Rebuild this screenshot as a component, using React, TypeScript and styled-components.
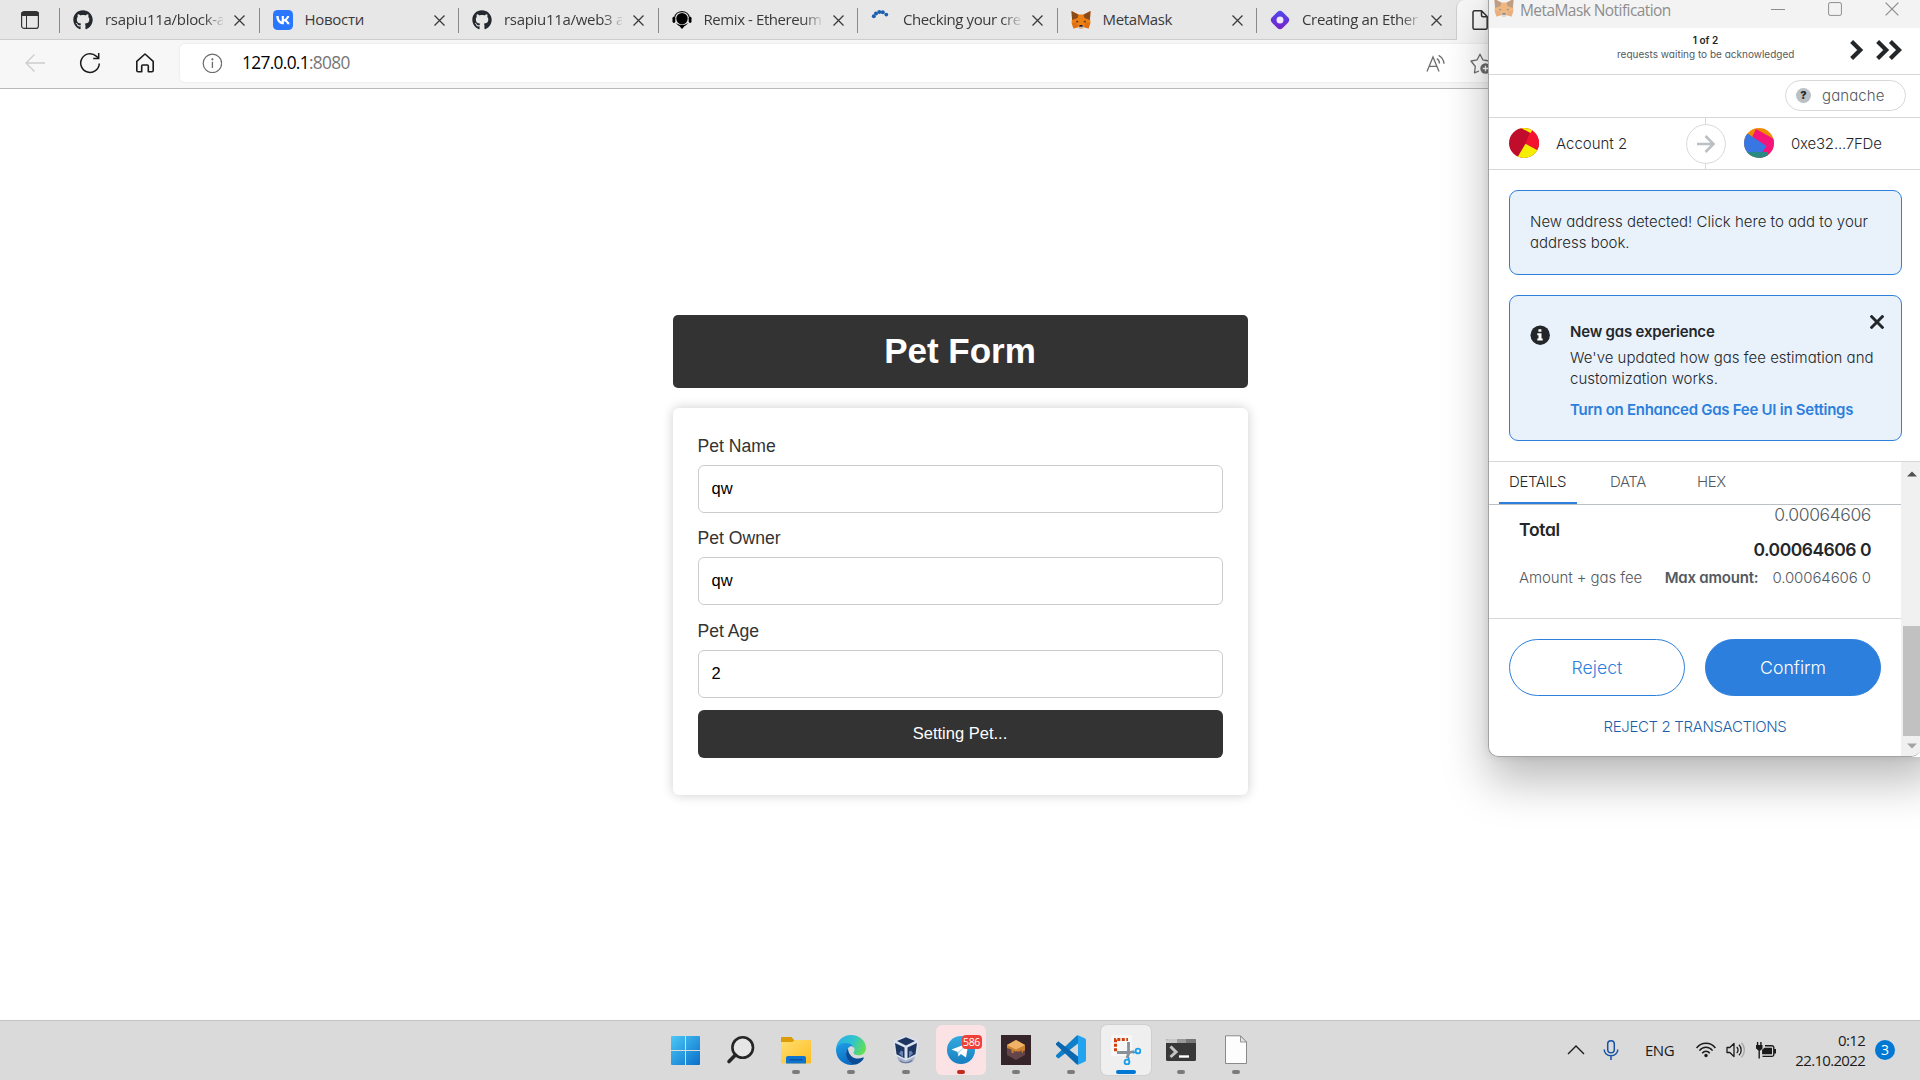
import React from "react";
import styled, { createGlobalStyle } from "styled-components";
import { FaGithub } from "react-icons/fa";

const segoe = `"Open Sans", "Noto Sans", sans-serif`;
const euclid = `Inter, "Open Sans", sans-serif`;
const arial = `"Liberation Sans", Arial, sans-serif`;

const GlobalStyle = createGlobalStyle`
  * { box-sizing: border-box; }
  body { margin: 0; background: #fff; overflow: hidden; }
  svg { display: block; flex: none; }
`;

/* ---------- shared ---------- */

const Screen = styled.div`
  position: relative;
  width: 1920px;
  height: 1080px;
  display: flex;
  flex-direction: column;
  overflow: hidden;
  background: #fff;
  font-family: ${segoe};
`;

const Text = styled.span<{ $ls?: number }>`
  white-space: nowrap;
  letter-spacing: ${(p) => p.$ls ?? 0}px;
`;

/* ---------- browser ---------- */

const TabStrip = styled.header`
  height: 40px;
  flex: none;
  display: flex;
  background: #e7e7e7;
  border-bottom: 1px solid #cdcdcd;
`;

const TabActions = styled.div`
  width: 59px;
  padding: 11px 0 0 21px;
`;

const Tab = styled.div`
  width: 199.5px;
  display: flex;
  align-items: flex-start;
  padding-top: 10px;

  &::before {
    content: "";
    width: 1px;
    height: 25px;
    margin-top: -2px;
    background: #8a8a8a;
  }
`;

const Favicon = styled.div`
  width: 20px;
  height: 20px;
  margin-left: 13px;
`;

const TabTitle = styled.div<{ $ls: number; $fade?: boolean }>`
  width: 118px;
  margin: -1px 0 0 12px;
  overflow: hidden;
  white-space: nowrap;
  font-size: 15px;
  line-height: 21px;
  letter-spacing: ${(p) => p.$ls}px;
  color: #3a3a3a;
  mask-image: ${(p) => (p.$fade ? "linear-gradient(90deg, #000 84%, transparent 102%)" : "none")};
`;

const TabClose = styled.div`
  margin: 5px 0 0 11px;
`;

const ActiveTab = styled.div`
  flex: 1;
  height: 40px;
  padding: 10px 0 0 15px;
  background: #f7f7f7;
  border-left: 1px solid #cfcfcf;
  border-radius: 8px 0 0 0;
`;

const Toolbar = styled.nav`
  height: 49px;
  flex: none;
  display: flex;
  align-items: center;
  padding: 0 0 2px 24px;
  background: #f7f7f7;
  border-bottom: 1px solid #b9b9b9;
`;

const NavIcon = styled.div<{ $gap: number }>`
  margin-right: ${(p) => p.$gap}px;
`;

const AddressBar = styled.div`
  flex: 1;
  height: 38px;
  display: flex;
  align-items: center;
  padding-left: 22px;
  background: #fff;
  border-radius: 5px 0 0 5px;
  box-shadow: 0 0 3px rgba(0, 0, 0, 0.08);
`;

const Url = styled.div`
  width: 1184px;
  margin: 0 0 0 20px;
  font-size: 17.3px;
  line-height: 24px;
  letter-spacing: -0.66px;
  color: #000;
  span { color: #767676; }
`;

const StarSlot = styled.div`
  margin-left: 24px;
`;

/* ---------- pet form ---------- */

const Page = styled.main`
  flex: 1;
  display: flex;
  flex-direction: column;
  align-items: center;
  padding-top: 226px;
  font-family: ${arial};
`;

const FormTitle = styled.h1`
  width: 575px;
  height: 73px;
  margin: 0 0 20px;
  border-radius: 5px;
  background: #333;
  color: #fff;
  font-size: 35px;
  line-height: 71px;
  text-align: center;
`;

const FormCard = styled.form`
  width: 575px;
  height: 387px;
  padding: 25px;
  border-radius: 6px;
  background: #fff;
  box-shadow: 0 0 12px rgba(0, 0, 0, 0.2);
`;

const Label = styled.label`
  display: block;
  height: 32px;
  font-size: 17.6px;
  line-height: 26px;
  color: #333;
`;

const Input = styled.input`
  display: block;
  width: 525px;
  height: 48px;
  margin-bottom: 12.4px;
  padding: 0 13px 1px;
  border: 1px solid #ccc;
  border-radius: 6px;
  background: #fff;
  font: 16.5px ${arial};
  color: #000;
  outline: none;
`;

const Submit = styled.button`
  width: 525px;
  height: 48px;
  padding: 0 0 1px;
  border: 0;
  border-radius: 6px;
  background: #333;
  color: #fff;
  font: 16.5px ${arial};
`;

/* ---------- wallet window ---------- */

const Window = styled.aside`
  position: absolute;
  top: -10px;
  left: 1488px;
  width: 433px;
  height: 767px;
  padding-top: 10px;
  display: flex;
  flex-direction: column;
  overflow: hidden;
  border: 1px solid #a3a3a3;
  border-top: 0;
  border-right: 0;
  border-radius: 0 0 10px 10px;
  background: #fff;
  font-family: ${euclid};
  font-feature-settings: "cv11", "ss03";
  font-size: 15px;
  font-weight: 350;
  color: #24272a;
`;

const WindowShadow = styled.div`
  position: absolute;
  top: -10px;
  left: 1488px;
  width: 450px;
  height: 767px;
  border-radius: 10px;
  box-shadow: 0 24px 46px rgba(0, 0, 0, 0.27), 0 0 8px rgba(0, 0, 0, 0.1);
`;

const WindowBar = styled.div`
  height: 28px;
  flex: none;
  display: flex;
  align-items: flex-start;
  padding-left: 5px;
  background: #f3f3f3;
  color: #8e8e8e;
  font: 15.5px/20px ${segoe};
`;

const FadedFox = styled.div`
  margin-top: -2px;
  opacity: 0.5;
`;

const WindowTitle = styled.div`
  width: 251px;
  margin-left: 6px;
  letter-spacing: -0.57px;
  white-space: nowrap;
`;

const WindowButtons = styled.div`
  display: flex;
  margin-top: 2px;
  gap: 43px;
`;

const QueueBar = styled.div`
  height: 47px;
  flex: none;
  display: flex;
  padding: 5px 0 0 128px;
  border-bottom: 1px solid #d6d9dc;
`;

const QueueText = styled.div`
  width: 177px;
  text-align: center;
  font-size: 10px;
  font-weight: 400;
  line-height: 14px;
  white-space: nowrap;
  color: #535a61;
  b { display: block; color: #24272a; font-weight: 600; }
`;

const QueueArrows = styled.div`
  display: flex;
  gap: 13px;
  margin: 7px 0 0 56px;
`;

const NetworkRow = styled.div`
  height: 43px;
  flex: none;
  display: flex;
  justify-content: flex-end;
  padding: 5px 15px 0 0;
  border-bottom: 1px solid #d6d9dc;
`;

const NetworkPill = styled.div`
  width: 121px;
  height: 31px;
  display: flex;
  align-items: center;
  gap: 11px;
  padding-left: 10px;
  border: 1px solid #d6d9dc;
  border-radius: 16px;
  color: #535a61;
`;

const QuestionDot = styled.div`
  width: 15px;
  height: 15px;
  border-radius: 50%;
  background: #bbc0c5;
  color: #24272a;
  font-size: 11px;
  font-weight: 800;
  line-height: 15px;
  text-align: center;
`;

const AccountRow = styled.div`
  height: 52px;
  flex: none;
  display: grid;
  grid-template-columns: 196px 41px 1fr;
  align-items: center;
  border-bottom: 1px solid #d6d9dc;
`;

const Party = styled.div<{ $pad: number }>`
  display: flex;
  align-items: center;
  gap: 17px;
  padding: 0 0 1px ${(p) => p.$pad}px;
`;

const Direction = styled.div`
  height: 51px;
  display: flex;
  flex-direction: column;
  align-items: center;
  &::before, &::after {
    content: "";
    flex: 1;
    width: 1px;
    background: #d6d9dc;
  }
`;

const Alerts = styled.section`
  display: flex;
  flex-direction: column;
  gap: 20px;
  padding: 20px 17px 20px 20px;
`;

const Alert = styled.div<{ $height: number }>`
  width: 393px;
  height: ${(p) => p.$height}px;
  display: flex;
  padding: 20px 0 0 20px;
  border: 1px solid #2c7fdc;
  border-radius: 9px;
  background: #e9f2fb;
  line-height: 21px;
`;

const AlertIcon = styled.div`
  width: 40px;
  padding-top: 9px;
`;

const AlertBody = styled.div`
  width: 300px;
  padding-top: 5px;
  display: flex;
  flex-direction: column;
`;

const AlertClose = styled.div`
  margin-top: -1px;
`;

const AlertTitle = styled(Text)`
  font-weight: 600;
  margin-bottom: 5px;
`;

const AlertLink = styled(Text)`
  margin-top: 10px;
  font-weight: 600;
  color: #2c7fdc;
`;

const Lines = styled.div`
  display: flex;
  flex-direction: column;
`;

const ScrollArea = styled.section`
  flex: 1;
  display: flex;
  border-top: 1px solid #d6d9dc;
`;

const ScrollContent = styled.div`
  width: 412px;
  display: flex;
  flex-direction: column;
`;

const DetailTabs = styled.div`
  height: 43px;
  flex: none;
  display: flex;
  align-items: flex-start;
  padding-left: 10px;
  border-bottom: 1px solid #bbc0c5;
`;

const DetailTab = styled.div<{ $width: number; $active?: boolean }>`
  width: ${(p) => p.$width}px;
  height: 42px;
  padding: 10px 0 0 10px;
  margin-right: 23px;
  line-height: 20px;
  white-space: nowrap;
  letter-spacing: -0.4px;
  color: ${(p) => (p.$active ? "#24272a" : "#535a61")};
  border-bottom: 2px solid ${(p) => (p.$active ? "#2c7fdc" : "transparent")};
`;

const Totals = styled.div`
  height: 114px;
  flex: none;
  padding: 0 30px;
  border-bottom: 1px solid #d6d9dc;
  color: #535a61;
`;

const TotalRow = styled.div`
  height: 58px;
  display: flex;
  justify-content: space-between;
`;

const TotalLabel = styled.div`
  padding-top: 14px;
  font-size: 17.5px;
  font-weight: 600;
  line-height: 22px;
  letter-spacing: -0.3px;
  color: #24272a;
`;

const Amounts = styled.div`
  display: flex;
  flex-direction: column;
  align-items: flex-end;
  font-size: 17.5px;
  line-height: 20px;
  b { margin-top: 15px; font-weight: 600; color: #24272a; white-space: nowrap; letter-spacing: -0.5px; }
`;

const FeeRow = styled.div`
  display: flex;
  justify-content: space-between;
  line-height: 40px;
  margin-top: -5px;
  b { font-weight: 600; white-space: nowrap; letter-spacing: -0.2px; margin-right: 14px; }
`;

const Actions = styled.div`
  display: flex;
  gap: 20px;
  padding: 20px 0 0 20px;
`;

const PillButton = styled.button<{ $primary?: boolean }>`
  width: 176px;
  height: 57px;
  padding: 0 0 1px;
  border: 1px solid #2c7fdc;
  border-radius: 29px;
  background: ${(p) => (p.$primary ? "#2c7fdc" : "#fff")};
  color: ${(p) => (p.$primary ? "#fff" : "#2c7fdc")};
  font-family: ${euclid};
  font-feature-settings: "cv11";
  font-size: 17.7px;
  font-weight: 350;
`;

const RejectAll = styled.div`
  margin-top: 20px;
  text-align: center;
  line-height: 21px;
  color: #1d5fa8;
`;

const Scrollbar = styled.div`
  width: 20px;
  display: flex;
  flex-direction: column;
  align-items: center;
  padding: 9px 0 8px 2px;
  background: #f0f0f0;
`;

const Thumb = styled.div`
  width: 18px;
  height: 110px;
  flex: none;
  margin: 149px 0 7px;
  background: #c1c1c1;
`;

/* ---------- taskbar ---------- */

const Taskbar = styled.footer`
  height: 60px;
  flex: none;
  display: flex;
  padding-left: 658px;
  border-top: 1px solid #c3c3c3;
  background: #dadada;
`;

const Slot = styled.div`
  width: 55px;
  height: 59px;
  display: flex;
  justify-content: center;
  padding-top: 4px;
`;

const Tile = styled.div<{ $bg?: string; $edge?: string }>`
  position: relative;
  width: 50px;
  height: 50px;
  display: flex;
  flex-direction: column;
  align-items: center;
  padding-top: 10px;
  border-radius: 6px;
  background: ${(p) => p.$bg ?? "transparent"};
  box-shadow: ${(p) => (p.$edge ? `0 0 0 1px ${p.$edge}` : "none")};
`;

const Running = styled.div<{ $width?: number; $color?: string }>`
  width: ${(p) => p.$width ?? 8}px;
  height: 4px;
  margin-top: 5px;
  border-radius: 2px;
  background: ${(p) => p.$color ?? "#7b7b7b"};
`;

const Unread = styled.div`
  position: absolute;
  top: 10px;
  left: 26px;
  width: 20px;
  height: 14px;
  border-radius: 4px;
  background: #f0403a;
  color: #fff;
  font: 10.5px/14px ${segoe};
  text-align: center;
  letter-spacing: -0.4px;
`;

const Tray = styled.div`
  display: flex;
  align-items: center;
  width: 352px;
  margin-left: 304px;
  padding-bottom: 1px;
  color: #1b1b1b;
`;

const TrayItem = styled.div<{ $gap: number }>`
  margin-right: ${(p) => p.$gap}px;
  font-size: 15px;
  white-space: nowrap;
`;

const Clock = styled.div`
  width: 88px;
  text-align: right;
  font-size: 15px;
  line-height: 20px;
  letter-spacing: -0.68px;
  white-space: nowrap;
`;

const NoticeCount = styled.div`
  width: 20px;
  height: 20px;
  margin-left: 10px;
  border-radius: 50%;
  background: #0078d4;
  color: #fff;
  font-size: 14px;
  line-height: 20px;
  text-align: center;
`;

/* ---------- drawings ---------- */

const Cross = ({ size = 11, color = "#3b3b3b", w = 1.3 }: { size?: number; color?: string; w?: number }) => (
  <svg width={size} height={size} viewBox="0 0 11 11" stroke={color} strokeWidth={w} fill="none">
    <path d="M.5 .5l10 10M10.5 .5l-10 10" />
  </svg>
);

const Fox = () => (
  <svg width="20" height="20" viewBox="0 0 20 20">
    <path d="M0.5 1L7.5 4.5h5L19.5 1 19 8.5 19.5 13 17.5 18.5 12.5 17.3 11.5 18.7h-3L7.5 17.3 2.5 18.5.5 13 1 8.5z" fill="#ee7f12" />
    <path d="M.5 1L7.5 4.7 6.5 8 1.2 10 .8 6zM19.5 1L12.5 4.7 13.5 8 18.8 10 19.2 6z" fill="#8a4a1c" />
    <path d="M5.6 10.4L8 12 5.2 12.4zM14.4 10.4L12 12 14.8 12.4z" fill="#3a2c26" />
    <path d="M7.5 16.4L8.5 15.3h3l1 1.1-.8 2.3H8.3z" fill="#cfc0b3" />
    <path d="M8.5 15h3l.3 1.7H8.2z" fill="#221b18" />
    <path d="M1 13.2L5 12.6 7.3 16.8 2.5 18.5zM19 13.2L15 12.6 12.7 16.8 17.5 18.5z" fill="#df6f12" />
  </svg>
);

const VkLogo = () => (
  <svg width="20" height="20" viewBox="0 0 20 20">
    <rect width="20" height="20" rx="4.6" fill="#2a77ff" />
    <path d="M10.7 14.3C6 14.3 3.4 11.1 3.3 6h2.300c.1 3.7 1.7 5.3 3.1 5.6V6h2.200v3.200c1.300-.1 2.700-1.600 3.200-3.200h2.200c-.4 2-1.800 3.500-2.900 4.100 1 .5 2.700 1.800 3.300 4.200h-2.400c-.5-1.600-1.800-2.800-3.400-3v3z" fill="#fff" />
  </svg>
);

const RemixLogo = () => (
  <svg width="20" height="20" viewBox="0 0 20 20">
    <path d="M2.600 7.500a7.500 7 0 0 1 14.800 0" fill="none" stroke="#111" strokeWidth="1.200" />
    <rect x="0.500" y="6.800" width="2.800" height="6.200" rx="1.400" />
    <rect x="16.700" y="6.800" width="2.800" height="6.200" rx="1.400" />
    <circle cx="10" cy="8.600" r="5.700" />
    <path d="M3.500 13l4 1.700h5l4-1.700-3.500 3-3 .5-3-.5zM7.500 16.300h5L10 19z" />
  </svg>
);

const LoadingDots = () => (
  <svg width="20" height="20" viewBox="0 0 20 20" fill="#1b5fae">
    <circle cx="2.800" cy="6.200" r="2" />
    <circle cx="5" cy="3.500" r="2" />
    <circle cx="8.300" cy="2" r="2" />
    <circle cx="11.800" cy="2.300" r="2" />
    <circle cx="15.300" cy="4.600" r="1.900" />
  </svg>
);

const HashLogo = () => (
  <svg width="20" height="20" viewBox="0 0 20 20">
    <defs>
      <linearGradient id="node" x1="0" y1="0" x2="1" y2="1">
        <stop offset="0" stopColor="#4a4cf0" />
        <stop offset="1" stopColor="#7a1fc4" />
      </linearGradient>
    </defs>
    <rect x="2.500" y="2.500" width="15" height="15" rx="3.800" transform="rotate(45 10 10)" fill="url(#node)" />
    <circle cx="10" cy="10" r="3.500" fill="#efe9fb" />
  </svg>
);

const TabActionsIcon = () => (
  <svg width="18" height="18" viewBox="0 0 18 18" fill="none" stroke="#333" strokeWidth="1.200">
    <rect x=".6" y=".6" width="16.800" height="16.800" rx="2.500" />
    <path d="M1 1.500h16v3H1z" fill="#333" />
    <path d="M5.500 5v12" strokeWidth="1" />
  </svg>
);

const FileOutline = () => (
  <svg width="16" height="20" viewBox="0 0 16 20" fill="none" stroke="#333" strokeWidth="1.500" strokeLinejoin="round">
    <path d="M2.500.8h7L15.200 6.500v11.200a1.500 1.500 0 0 1-1.500 1.500H2.500A1.500 1.500 0 0 1 1 17.700V2.300A1.500 1.500 0 0 1 2.500.8zM9.500 1v4.200a1.500 1.500 0 0 0 1.500 1.500h4" />
  </svg>
);

const BackIcon = () => (
  <svg width="22" height="20" viewBox="0 0 22 20" fill="none" stroke="#cdcdcd" strokeWidth="1.400">
    <path d="M21 10H2M10.500 1.500L2 10l8.500 8.500" />
  </svg>
);

const ReloadIcon = () => (
  <svg width="22" height="22" viewBox="0 0 22 22" fill="none" stroke="#1b1b1b" strokeWidth="1.500">
    <path d="M20.300 11.500A9.300 9.300 0 1 1 17.200 4.100L19.500 6M19.700 1v5.500h-5.500" />
  </svg>
);

const HomeIcon = () => (
  <svg width="20" height="20" viewBox="0 0 20 20" fill="none" stroke="#1b1b1b" strokeWidth="1.600" strokeLinejoin="round">
    <path d="M1.800 8.300L10 1l8.200 7.300v9.200a1.300 1.300 0 0 1-1.300 1.300h-3.600V13a1 1 0 0 0-1-1H7.700a1 1 0 0 0-1 1v5.800H3.100a1.300 1.300 0 0 1-1.300-1.300z" />
  </svg>
);

const SiteInfoIcon = () => (
  <svg width="20" height="20" viewBox="0 0 20 20" fill="none" stroke="#6a6a6a" strokeWidth="1.200">
    <circle cx="10.400" cy="10.400" r="9.200" />
    <path d="M10.400 8.800v6.200" strokeWidth="1.300" />
    <circle cx="10.400" cy="6.300" r=".5" fill="#6a6a6a" />
  </svg>
);

const ReadAloudIcon = () => (
  <svg width="20" height="19" viewBox="0 0 20 19" fill="none" stroke="#6e6e6e" strokeWidth="1.300">
    <path d="M1 17.500L7 3l6 14.500M3.200 12.300h7.600" />
    <path d="M10.800 4.500a6 6 0 0 1 2.700 5M12.600 1.300a10 10 0 0 1 5.400 8.500" />
  </svg>
);

const StarIcon = () => (
  <svg width="22" height="21" viewBox="0 0 22 21" fill="none" stroke="#6e6e6e" strokeWidth="1.300" strokeLinejoin="round">
    <path d="M9 18l-4.500 1.800.8-6.300L1 8l6.200-1.200L10 1.200l2.800 5.600L19 8" />
    <circle cx="15.500" cy="15.500" r="5.200" fill="#6e6e6e" stroke="none" />
    <path d="M15.500 12.800v5.400M12.800 15.500h5.400" stroke="#fff" />
  </svg>
);

const Chevron = ({ double }: { double?: boolean }) => (
  <svg width={double ? 26 : 13} height="20" viewBox={double ? "0 0 26 20" : "0 0 13 20"} fill="none" stroke="#24272a" strokeWidth="4.200">
    <path d="M1.600 1.600L10.200 10l-8.600 8.400" />
    {double && <path d="M14.400 1.600L23 10l-8.600 8.400" />}
  </svg>
);

const AvatarRed = () => (
  <svg width="30" height="30" viewBox="0 0 30 30">
    <clipPath id="av1"><circle cx="15" cy="15" r="15" /></clipPath>
    <g clipPath="url(#av1)">
      <rect width="30" height="30" fill="#c00d2b" />
      <path d="M21 4L24 0h6v22L16.500 15.700z" fill="#f3122f" />
      <path d="M16.500 15.700L30 23v7H8z" fill="#f5ee00" />
      <path d="M12 0l9.500 5 2-3-4-3z" fill="#f5ee00" />
    </g>
  </svg>
);

const AvatarBlue = () => (
  <svg width="30" height="30" viewBox="0 0 30 30">
    <clipPath id="av2"><circle cx="15" cy="15" r="15" /></clipPath>
    <g clipPath="url(#av2)">
      <rect width="30" height="30" fill="#f28a00" />
      <path d="M12 1L30 11v19H16L8.500 8z" fill="#f5147a" />
      <path d="M-1 2.500L22.500 18 17 26H-2z" fill="#3876e3" />
      <path d="M0 24h24v7H0z" fill="#2a8a83" />
    </g>
  </svg>
);

const ArrowCircle = () => (
  <svg width="40" height="40" viewBox="0 0 40 40" fill="none">
    <circle cx="20" cy="20" r="19.400" stroke="#d6d9dc" />
    <path d="M11 20h16M19.500 12l8 8-8 8" stroke="#bbc0c5" strokeWidth="2.600" />
  </svg>
);

const InfoIcon = () => (
  <svg width="20" height="20" viewBox="0 0 20 20">
    <circle cx="10.200" cy="10.200" r="9.700" fill="#24272a" />
    <path d="M8.400 4.200h3v2.600h-3zM7.300 8.200h4.200v5.400h1.200v2H7.300v-2h1.200v-3.400H7.300z" fill="#fff" />
  </svg>
);

const ScrollArrow = ({ down }: { down?: boolean }) => (
  <svg width="10" height="6" viewBox="0 0 10 6">
    <path d={down ? "M0 .5h10L5 5.500z" : "M0 5.500h10L5 .5z"} fill={down ? "#a3a3a3" : "#505050"} />
  </svg>
);

const WindowsLogo = () => (
  <svg width="30" height="30" viewBox="0 0 30 30">
    <defs>
      <linearGradient id="win" x1="0" y1="0" x2="1" y2="1">
        <stop offset="0" stopColor="#4cc8f8" />
        <stop offset="1" stopColor="#0a6fc9" />
      </linearGradient>
    </defs>
    <path d="M0 2A1 1 0 0 1 1 1H14v14H0zM15 1h13a1 1 0 0 1 1 1v13H15zM0 16h14v14H1a1 1 0 0 1-1-1zM15 16h14v13a1 1 0 0 1-1 1H15z" fill="url(#win)" />
  </svg>
);

const SearchLogo = () => (
  <svg width="30" height="30" viewBox="0 0 30 30" fill="none" stroke="#262626">
    <circle cx="16.700" cy="12.500" r="10.300" strokeWidth="2.600" fill="#e6e6e6" />
    <path d="M9.400 20L3 26.500" strokeWidth="3.600" strokeLinecap="round" />
  </svg>
);

const FolderLogo = () => (
  <svg width="30" height="30" viewBox="0 0 30 30">
    <defs>
      <linearGradient id="fold" x1="0" y1="0" x2="1" y2="1">
        <stop offset="0" stopColor="#ffdf70" />
        <stop offset="1" stopColor="#fdbd22" />
      </linearGradient>
    </defs>
    <path d="M0 3a1 1 0 0 1 1-1h9.500l2.500 3h15a2 2 0 0 1 2 2v6H0z" fill="#dc9c05" />
    <path d="M0 7h11.500l2-2H29a1 1 0 0 1 1 1v21.500a1 1 0 0 1-1 1H1a1 1 0 0 1-1-1z" fill="url(#fold)" />
    <path d="M5 28.500V23a2 2 0 0 1 2-2h16a2 2 0 0 1 2 2v5.500z" fill="#0f74cf" />
    <path d="M8.500 24.800h13" stroke="#0a4d94" strokeWidth="1.200" />
  </svg>
);

const EdgeLogo = () => (
  <svg width="30" height="30" viewBox="0 0 30 30">
    <defs>
      <linearGradient id="e1" x1="0" y1=".3" x2="1" y2=".6">
        <stop offset="0" stopColor="#2aaee6" />
        <stop offset=".5" stopColor="#2fc3cf" />
        <stop offset="1" stopColor="#66e04f" />
      </linearGradient>
      <linearGradient id="e2" x1="0" y1="0" x2=".3" y2="1">
        <stop offset="0" stopColor="#1fa0e6" />
        <stop offset="1" stopColor="#0c6cc4" />
      </linearGradient>
    </defs>
    <path d="M0 13.500C1 5.500 7 0 15 0c8.500 0 15 6 15 13 0 4.500-3.200 7.300-7.300 7.300-3.300 0-5.200-1.300-5.200-2.500 0-.8 1-1.300 1-3.300C18.500 11.800 15.600 9 11 9 5.500 9 1 11.500 0 13.500z" fill="url(#e1)" />
    <path d="M0 14C1 9.500 6 7.500 10.500 8c4 .4 7 2.500 7.800 5.200-1.300-1.900-3-2.200-4.600-1.500C8.500 14 9.500 26 18 29.700A15 15 0 0 1 0 15z" fill="url(#e2)" />
    <path d="M12 13.200c-4.500 5.800-.5 14.300 6 16.500 4 0 8-3 9.800-6.500.3-.7-.3-1-1-.7-6 3-14.500 0-14.800-9.300z" fill="#0b4c96" />
  </svg>
);

const VirtualBoxLogo = () => (
  <svg width="30" height="30" viewBox="0 0 30 30">
    <path d="M6 21l1 4c2 4.500 14 4.500 16 0l1-4z" fill="#a9b3c9" />
    <path d="M9 25.500c2 3 9 3 12 0" fill="none" stroke="#67799f" strokeWidth="1.200" />
    <path d="M2.500 5.500L15 .8l12.500 4.700-1.500 15-11 5-11-5z" fill="#dbe2ef" />
    <path d="M6 6L15 2.300 24 6l-9 4.500zM4 8l9.500 4.400v10.800L5.500 19.300zM26 8l-9.500 4.400v10.800l8-3.900z" fill="#1d365f" />
    <path d="M5.500 16.500l2.500 2 2-3 2 1v5.500zM24.500 16.500L22 18.500l-2-3-2 1v5.500z" fill="#6883b3" />
  </svg>
);

const TelegramLogo = () => (
  <svg width="30" height="30" viewBox="0 0 30 30">
    <defs>
      <linearGradient id="tg" x1="0" y1="0" x2="0" y2="1">
        <stop offset="0" stopColor="#35abdf" />
        <stop offset="1" stopColor="#177fc0" />
      </linearGradient>
    </defs>
    <circle cx="15" cy="15" r="14" fill="url(#tg)" />
    <path d="M5.500 14.500L22.500 8 20 22.500l-5-3.500-2.700 2.600-.6-4.500z" fill="#fff" />
    <path d="M11.700 17.100L20 10.500 13 18l-.7 3.600z" fill="#b6d6ea" />
  </svg>
);

const HoneyLogo = () => (
  <svg width="30" height="30" viewBox="0 0 30 30">
    <rect width="30" height="30" fill="#35242a" />
    <path d="M6 10l9 4.500 9-4.500v10l-9 5-9-5z" fill="#64454a" />
    <path d="M6 10l9-5 9 5v5.500l-2 .5v2l-1.500-1v-2l-2 1.500-2 .2V16l-2 .7-2-1.200v3l-2-1v-3L6 13z" fill="#cd8232" />
    <path d="M6 10l9-5 9 5-9 4.500z" fill="#f0b365" />
  </svg>
);

const CodeLogo = () => (
  <svg width="30" height="30" viewBox="0 0 30 30">
    <path d="M0 20.300c-.4.500-.3 1 .1 1.400l1.600 1.400c.5.400 1 .4 1.500 0L22 8.500V.5c-.8 0-1.400.3-2 .8z" fill="#0f7fc9" />
    <path d="M0 9.700c-.4-.5-.3-1 .1-1.400L1.700 6.900c.5-.4 1-.4 1.500 0L22 21.500v8c-.8 0-1.400-.3-2-.8z" fill="#0a67b1" />
    <path d="M22 .3L28.700 3.300A2 2 0 0 1 30 5.200v19.600a2 2 0 0 1-1.300 1.900L22 29.700c-.9.300-1.500.1-2-.6 1 .5 2 0 2-1V2c0-1-1-1.500-2-1 .5-.7 1.100-1 2-.7z" fill="#22a3f0" />
  </svg>
);

const SnipLogo = () => (
  <svg width="30" height="30" viewBox="0 0 30 30" fill="none">
    <rect x="0" y="0" width="21" height="21" rx="2" fill="#f7f7f7" />
    <path d="M4.500 16.200V4.500H17" stroke="#d2400a" strokeWidth="3" strokeDasharray="3 1.500" />
    <path d="M17.500 7v12l-1.500 4M6 17.500h12l5-1" stroke="#8a9097" strokeWidth="2.800" />
    <circle cx="27" cy="16" r="2.400" stroke="#1c9ee8" strokeWidth="1.900" />
    <circle cx="16" cy="27" r="2.400" stroke="#1c9ee8" strokeWidth="1.900" />
    <path d="M24.500 17l-2.500.8M17.500 24.500l.5-2" stroke="#1c9ee8" strokeWidth="1.800" />
  </svg>
);

const TerminalLogo = () => (
  <svg width="30" height="30" viewBox="0 0 30 30">
    <rect y="4" width="30" height="22" rx="1.500" fill="#383838" />
    <path d="M0 8V5.500A1.500 1.500 0 0 1 1.500 4H11v4z" fill="#c8c8c8" />
    <path d="M11 4h9v4h-9z" fill="#9a9a9a" />
    <path d="M20 4h8.500A1.500 1.500 0 0 1 30 5.500V8H20z" fill="#777" />
    <path d="M4.500 11.500L10 17l-5.500 5" fill="none" stroke="#c4c4c4" strokeWidth="3" />
    <path d="M13 21.500h10" stroke="#fff" strokeWidth="2.400" />
  </svg>
);

const BlankFileLogo = () => (
  <svg width="30" height="30" viewBox="0 0 30 30">
    <path d="M4.500.8H19.500L25.500 7v21.500h-21z" fill="#fdfdfd" stroke="#8a8a8a" strokeWidth="1" />
    <path d="M19.500 1v6h6z" fill="#e4e4e4" stroke="#8a8a8a" strokeWidth=".9" />
  </svg>
);

const ChevronUp = () => (
  <svg width="18" height="10" viewBox="0 0 18 10" fill="none" stroke="#1b1b1b" strokeWidth="1.400">
    <path d="M1 9l8-8 8 8" />
  </svg>
);

const MicIcon = () => (
  <svg width="16" height="20" viewBox="0 0 16 20" fill="none" stroke="#1551a5" strokeWidth="1.500">
    <rect x="4.700" y=".8" width="6.600" height="12" rx="3.300" />
    <path d="M1.200 9.500a6.800 6.300 0 0 0 13.600 0M8 16v4" />
  </svg>
);

const WifiIcon = () => (
  <svg width="20" height="16" viewBox="0 0 20 16" fill="none" stroke="#1b1b1b" strokeWidth="1.500">
    <path d="M.6 6C5.500-.2 14.500-.2 19.400 6M3.400 8.600c3.600-4.400 9.600-4.400 13.200 0M6.200 11.200c2.200-2.600 5.400-2.600 7.600 0" />
    <circle cx="10" cy="13.500" r="1.700" fill="#1b1b1b" stroke="none" />
  </svg>
);

const VolumeIcon = () => (
  <svg width="20" height="16" viewBox="0 0 20 16" fill="none" stroke="#1b1b1b" strokeWidth="1.300">
    <path d="M1 5.500h2.800L8 1.500v13l-4.200-4H1z" strokeLinejoin="round" />
    <path d="M10.700 5a4 4 0 0 1 0 6M13 2.700a7.500 7.500 0 0 1 0 10.600" />
    <path d="M15.500.8a10.500 10.500 0 0 1 0 14.400" stroke="#a5a5a5" />
  </svg>
);

const BatteryIcon = () => (
  <svg width="20" height="17" viewBox="0 0 20 17" fill="none" stroke="#1b1b1b" strokeWidth="1.400">
    <path d="M9 3.800h7a1.800 1.800 0 0 1 1.800 1.800v7a1.800 1.800 0 0 1-1.800 1.800H6.500" />
    <path d="M6.800 11.500V8l2-1.500h6.500v5z" fill="#1b1b1b" />
    <path d="M18 7h2v4.500h-2z" fill="#1b1b1b" stroke="none" />
    <path d="M0 3h6.500v3.500L4.500 8.500h-2L0 6.500z" fill="#1b1b1b" stroke="none" />
    <path d="M1.600 0v3M4.900 0v3M3.200 8v8.500" />
  </svg>
);

/* ---------- content ---------- */

const tabs = [
  { title: "rsapiu11a/block-a", ls: -0.3, fade: true, icon: <FaGithub size={20} color="#24292f" /> },
  { title: "Новости", ls: -0.3, icon: <VkLogo /> },
  { title: "rsapiu11a/web3 a", ls: -0.3, fade: true, icon: <FaGithub size={20} color="#24292f" /> },
  { title: "Remix - Ethereum", ls: -0.42, fade: true, icon: <RemixLogo /> },
  { title: "Checking your cre", ls: -0.4, fade: true, icon: <LoadingDots /> },
  { title: "MetaMask", ls: -0.35, icon: <Fox /> },
  { title: "Creating an Ether", ls: -0.35, fade: true, icon: <HashLogo /> },
];

const fields = [
  { label: "Pet Name", value: "qw" },
  { label: "Pet Owner", value: "qw" },
  { label: "Pet Age", value: "2" },
];

const apps: { icon: React.ReactNode; running?: boolean; bg?: string; edge?: string; mark?: string; markWidth?: number; unread?: string }[] = [
  { icon: <WindowsLogo /> },
  { icon: <SearchLogo /> },
  { icon: <FolderLogo />, running: true },
  { icon: <EdgeLogo />, running: true },
  { icon: <VirtualBoxLogo />, running: true },
  { icon: <TelegramLogo />, running: true, bg: "#fbe3e5", mark: "#c42b1c", unread: "586" },
  { icon: <HoneyLogo />, running: true },
  { icon: <CodeLogo />, running: true },
  { icon: <SnipLogo />, running: true, bg: "#efefef", edge: "#d0d0d0", mark: "#0078d4", markWidth: 20 },
  { icon: <TerminalLogo />, running: true },
  { icon: <BlankFileLogo />, running: true },
];

const Browser = () => (
  <>
    <TabStrip>
      <TabActions><TabActionsIcon /></TabActions>
      {tabs.map((t) => (
        <Tab key={t.title}>
          <Favicon>{t.icon}</Favicon>
          <TabTitle $ls={t.ls} $fade={t.fade}>{t.title}</TabTitle>
          <TabClose><Cross /></TabClose>
        </Tab>
      ))}
      <ActiveTab><FileOutline /></ActiveTab>
    </TabStrip>
    <Toolbar>
      <NavIcon $gap={33}><BackIcon /></NavIcon>
      <NavIcon $gap={34}><ReloadIcon /></NavIcon>
      <NavIcon $gap={25}><HomeIcon /></NavIcon>
      <AddressBar>
        <SiteInfoIcon />
        <Url>127.0.0.1<span>:8080</span></Url>
        <ReadAloudIcon />
        <StarSlot><StarIcon /></StarSlot>
      </AddressBar>
    </Toolbar>
  </>
);

const PetForm = () => (
  <Page>
    <FormTitle>Pet Form</FormTitle>
    <FormCard>
      {fields.map((f) => (
        <React.Fragment key={f.label}>
          <Label>{f.label}</Label>
          <Input defaultValue={f.value} />
        </React.Fragment>
      ))}
      <Submit type="button">Setting Pet...</Submit>
    </FormCard>
  </Page>
);

const Wallet = () => (
  <Window>
    <WindowBar>
      <FadedFox><Fox /></FadedFox>
      <WindowTitle>MetaMask Notification</WindowTitle>
      <WindowButtons>
        <svg width="14" height="14" viewBox="0 0 14 14" stroke="#8e8e8e"><path d="M0 7.500h14" /></svg>
        <svg width="14" height="14" viewBox="0 0 14 14" stroke="#8e8e8e" fill="none"><rect x=".6" y=".6" width="12.800" height="12.800" rx="1.500" /></svg>
        <Cross size={14} color="#8e8e8e" w={1} />
      </WindowButtons>
    </WindowBar>
    <QueueBar>
      <QueueText><b>1 of 2</b>requests waiting to be acknowledged</QueueText>
      <QueueArrows><Chevron /><Chevron double /></QueueArrows>
    </QueueBar>
    <NetworkRow>
      <NetworkPill><QuestionDot>?</QuestionDot><Text $ls={0.1}>ganache</Text></NetworkPill>
    </NetworkRow>
    <AccountRow>
      <Party $pad={20}><AvatarRed /><Text>Account 2</Text></Party>
      <Direction><ArrowCircle /></Direction>
      <Party $pad={18}><AvatarBlue /><Text $ls={-0.2}>0xe32...7FDe</Text></Party>
    </AccountRow>
    <Alerts>
      <Alert $height={85}>
        <Lines>
          <Text>New address detected! Click here to add to your</Text>
          <Text>address book.</Text>
        </Lines>
      </Alert>
      <Alert $height={146}>
        <AlertIcon><InfoIcon /></AlertIcon>
        <AlertBody>
          <AlertTitle $ls={-0.2}>New gas experience</AlertTitle>
          <Text>We've updated how gas fee estimation and</Text>
          <Text>customization works.</Text>
          <AlertLink $ls={-0.27}>Turn on Enhanced Gas Fee UI in Settings</AlertLink>
        </AlertBody>
        <AlertClose><Cross size={14} color="#24272a" w={2.300} /></AlertClose>
      </Alert>
    </Alerts>
    <ScrollArea>
      <ScrollContent>
        <DetailTabs>
          <DetailTab $width={78} $active>DETAILS</DetailTab>
          <DetailTab $width={64}>DATA</DetailTab>
          <DetailTab $width={50}>HEX</DetailTab>
        </DetailTabs>
        <Totals>
          <TotalRow>
            <TotalLabel>Total</TotalLabel>
            <Amounts>
              <Text $ls={-0.4}>0.00064606</Text>
              <b>0.00064606 0</b>
            </Amounts>
          </TotalRow>
          <FeeRow>
            <Text $ls={-0.1}>Amount + gas fee</Text>
            <div>
              <b>Max amount:</b>
              <Text $ls={-0.1}>0.00064606 0</Text>
            </div>
          </FeeRow>
        </Totals>
        <Actions>
          <PillButton>Reject</PillButton>
          <PillButton $primary>Confirm</PillButton>
        </Actions>
        <RejectAll><Text $ls={-0.35}>REJECT 2 TRANSACTIONS</Text></RejectAll>
      </ScrollContent>
      <Scrollbar>
        <ScrollArrow />
        <Thumb />
        <ScrollArrow down />
      </Scrollbar>
    </ScrollArea>
  </Window>
);

const Dock = () => (
  <Taskbar>
    {apps.map((a, i) => (
      <Slot key={i}>
        <Tile $bg={a.bg} $edge={a.edge}>
          {a.icon}
          {a.running && <Running $color={a.mark} $width={a.markWidth} />}
          {a.unread && <Unread>{a.unread}</Unread>}
        </Tile>
      </Slot>
    ))}
    <Tray>
      <TrayItem $gap={18}><ChevronUp /></TrayItem>
      <TrayItem $gap={26}><MicIcon /></TrayItem>
      <TrayItem $gap={22}><Text $ls={-0.5}>ENG</Text></TrayItem>
      <TrayItem $gap={10}><WifiIcon /></TrayItem>
      <TrayItem $gap={10}><VolumeIcon /></TrayItem>
      <TrayItem $gap={1}><BatteryIcon /></TrayItem>
      <Clock>0:12<br />22.10.2022</Clock>
      <NoticeCount>3</NoticeCount>
    </Tray>
  </Taskbar>
);

export default function App() {
  return (
    <Screen>
      <GlobalStyle />
      <Browser />
      <PetForm />
      <WindowShadow />
      <Wallet />
      <Dock />
    </Screen>
  );
}
